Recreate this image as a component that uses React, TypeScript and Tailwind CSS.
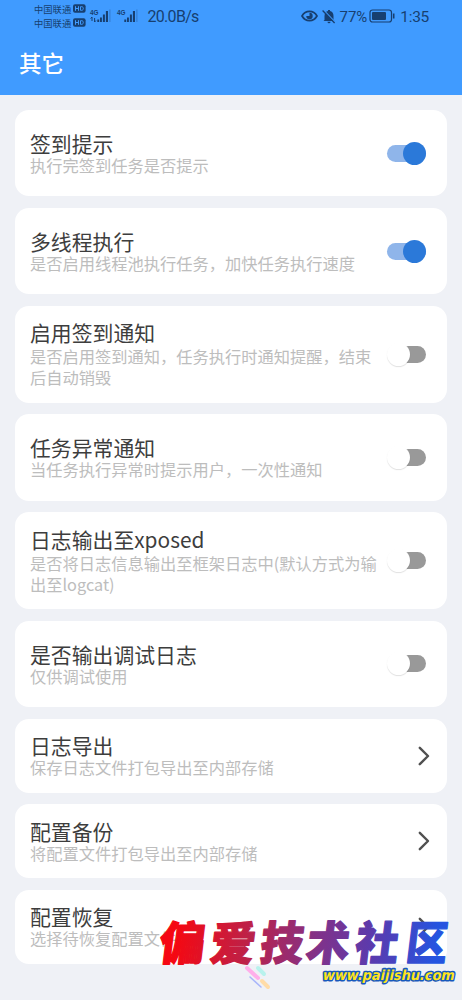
import React from "react";

type Kind = "on" | "off" | "link";
type Item = { title: string; lines: string[]; kind: Kind };

const items: Item[] = [
  { title: "签到提示", lines: ["执行完签到任务是否提示"], kind: "on" },
  { title: "多线程执行", lines: ["是否启用线程池执行任务，加快任务执行速度"], kind: "on" },
  { title: "启用签到通知", lines: ["是否启用签到通知，任务执行时通知提醒，结束", "后自动销毁"], kind: "off" },
  { title: "任务异常通知", lines: ["当任务执行异常时提示用户，一次性通知"], kind: "off" },
  { title: "日志输出至xposed", lines: ["是否将日志信息输出至框架日志中(默认方式为输", "出至logcat)"], kind: "off" },
  { title: "是否输出调试日志", lines: ["仅供调试使用"], kind: "off" },
  { title: "日志导出", lines: ["保存日志文件打包导出至内部存储"], kind: "link" },
  { title: "配置备份", lines: ["将配置文件打包导出至内部存储"], kind: "link" },
  { title: "配置恢复", lines: ["选择待恢复配置文件"], kind: "link" },
];

function Toggle({ on }: { on: boolean }) {
  return on ? (
    <div className="flex h-[17px] w-[39px] items-center justify-end rounded-full bg-[#8fb5ea]">
      <div className="size-[23px] shrink-0 rounded-full bg-[#2b79d9]" />
    </div>
  ) : (
    <div className="flex h-[17px] w-[39px] items-center justify-start">
      <div className="z-10 size-[23px] shrink-0 rounded-full bg-white shadow-[0_1px_1px_rgba(0,0,0,0.12)]" />
      <div className="-ml-[10px] h-[17px] w-[26px] shrink-0 rounded-r-full bg-[#999999]" />
    </div>
  );
}

function Chevron() {
  return (
    <svg className="h-[20px] w-[12px]" viewBox="0 0 12 20" fill="none" stroke="#505050" strokeWidth="2.4" strokeLinecap="round" strokeLinejoin="round">
      <path d="M1.8 1.8 10 10 1.8 18.2" />
    </svg>
  );
}

function Card({ item }: { item: Item }) {
  const two = item.lines.length > 1;
  const link = item.kind === "link";
  const height = link ? "h-[74px]" : two ? "h-[97px]" : "h-[86.4px]";
  const offset = link || two ? "pt-[1px]" : "pt-[2px]";
  return (
    <section className={`flex shrink-0 items-center justify-between rounded-[14px] bg-white pl-[15px] ${link ? "pr-[17px]" : "pr-[21px]"} ${height}`}>
      <div className={`whitespace-nowrap ${offset}`}>
        <h2 className="text-[20.85px] leading-[23px] text-[#3d3d3d]">{item.title}</h2>
        <div className={`text-[16.25px] leading-[21px] text-[#bdbdbd] ${two ? "mt-[2px]" : "mt-0"}`}>
          {item.lines.map((line) => (
            <p key={line}>{line}</p>
          ))}
        </div>
      </div>
      {link ? <Chevron /> : <Toggle on={item.kind === "on"} />}
    </section>
  );
}

function Carrier() {
  return (
    <div className="flex h-[14px] items-center gap-[2px]">
      <span className="shrink-0 whitespace-nowrap text-[9.3px] leading-[14px]">中国联通</span>
      <svg className="h-[9px] w-[13px] shrink-0" viewBox="0 0 13 9">
        <rect y=".3" width="12.6" height="8.4" rx="2" fill="#173f70" />
        <path d="M2.500 2.200v4.600M5.500 2.200v4.600M2.500 4.500h3M7.500 2.700v3.600h1.300c2 0 2-3.600 0-3.600z" fill="none" stroke="#409bff" strokeWidth="1" />
      </svg>
    </div>
  );
}

function Signal({ data }: { data?: boolean }) {
  return (
    <svg className="h-[16px] w-[22px] overflow-visible" viewBox="0 0 22 16" fill="#173f70">
      <text x="0" y="6.500" fontFamily="'Liberation Sans', sans-serif" fontSize="8" fontWeight="700" textLength="8.500" lengthAdjust="spacingAndGlyphs">4G</text>
      {data && <path d="M2 9v4M4.600 10v4M.600 10.500 2 9M4.600 14l1.300-1.500" fill="none" stroke="#173f70" strokeWidth="1" />}
      <rect x="7.300" y="11.500" width="1.900" height="2.500" />
      <rect x="10" y="9.500" width="1.900" height="4.500" />
      <rect x="12.900" y="6.500" width="2" height="7.500" />
      <rect x="15.900" y="3" width="2.100" height="11" />
      <rect x="19.400" y="1.500" width="1" height="12.500" opacity=".35" />
    </svg>
  );
}

function StatusBar() {
  return (
    <div className="flex h-[32px] items-center justify-between pl-[34px] pr-[33px] text-[#173f70]">
      <div className="flex items-center">
        <div className="flex w-[52px] flex-col pb-[1px]">
          <Carrier />
          <Carrier />
        </div>
        <div className="ml-[4px] flex gap-[4.5px]">
          <Signal data />
          <Signal />
        </div>
        <span className="ml-[9px] pt-[2px] font-['Roboto'] text-[16px] leading-[20px] tracking-[-0.7px]">20.0B/s</span>
      </div>
      <div className="flex items-center">
        <svg className="h-[12px] w-[17px]" viewBox="0 0 17 12" fill="none" stroke="#173f70" strokeWidth="1.7">
          <path d="M1 6C4.500-.2 12.500-.2 16 6 12.500 12.200 4.500 12.200 1 6Z" />
          <path d="M8.500 2.800A3.200 3.200 0 1 1 5.300 6L8.500 6Z" fill="#173f70" stroke="none" />
        </svg>
        <svg className="ml-[4px] h-[15px] w-[14px]" viewBox="0 0 14 15" fill="#173f70">
          <path d="M2.500 11V7C2.500 4 4 2.600 6 2.100V1h2v1.100C10 2.600 11.500 4 11.500 7v4l1 1H1.500ZM5.500 12.800h3a1.500 1.500 0 0 1-3 0Z" />
          <path d="m1.500 1 12 12.500" stroke="#409bff" strokeWidth="1.100" />
          <path d="m.600 1.500 12 12.500" stroke="#173f70" strokeWidth="1.300" />
        </svg>
        <span className="ml-[3px] pt-[1px] font-['Roboto'] text-[15px] leading-[20px]">77%</span>
        <svg className="ml-[2px] h-[14px] w-[26px]" viewBox="0 0 26 14" fill="none">
          <rect x="1" y="1" width="21.500" height="12" rx="2.500" stroke="#173f70" strokeWidth="1.200" />
          <rect x="3" y="3" width="14" height="8" rx="1" fill="#173f70" />
          <path d="M24.700 4.500v5" stroke="#173f70" strokeWidth="1.600" />
        </svg>
        <span className="ml-[5px] pt-[1px] font-['Roboto'] text-[15.5px] leading-[20px] tracking-[-0.3px]">1:35</span>
      </div>
    </div>
  );
}

function Watermark() {
  const glyphs: [string, number, number][] = [
    ["偏", 160, 46],
    ["爱", 211, 45],
    ["技", 261, 43],
    ["术", 307, 43],
    ["社", 356, 43],
    ["区", 407, 41],
  ];
  return (
    <svg className="pointer-events-none absolute bottom-0 left-0 h-[100px] w-[462px]" viewBox="0 900 462 100">
      <defs>
        <linearGradient id="brand" gradientUnits="userSpaceOnUse" x1="161" y1="0" x2="448" y2="0">
          <stop offset="0.05" stopColor="#f50812" />
          <stop offset="0.3" stopColor="#bd2148" />
          <stop offset="0.55" stopColor="#80328a" />
          <stop offset="0.75" stopColor="#583bb0" />
          <stop offset="0.96" stopColor="#2454e0" />
        </linearGradient>
      </defs>
      <g strokeLinecap="round" fill="none">
        <path d="m247 968 11 10" stroke="#ffafea" strokeWidth="4" />
        <path d="m258 968 6 6" stroke="#b8f2ed" strokeWidth="4" />
        <path d="m262 981 6 6" stroke="#ffdca8" strokeWidth="4" />
        <path d="m250 977 11 10" stroke="#a9b6fa" strokeWidth="1.500" />
      </g>
      <g transform="translate(0 943) skewX(-7) translate(0 -943)" fill="url(#brand)" stroke="url(#brand)" strokeWidth="1.300" strokeLinejoin="round" fontSize="46" fontWeight="900">
        {glyphs.map(([char, x, width]) => (
          <text key={char} x={x} y="960.500" textLength={width} lengthAdjust="spacingAndGlyphs">{char}</text>
        ))}
      </g>
      <text transform="translate(322 980) skewX(-12)" textLength="132" lengthAdjust="spacingAndGlyphs" fontFamily="'DejaVu Sans', sans-serif" fontSize="14" fontWeight="700" fill="#ffe51a" stroke="#1759bd" strokeWidth="3" strokeLinejoin="round" paintOrder="stroke">www.paijishu.com</text>
    </svg>
  );
}

export default function App() {
  return (
    <div className="relative flex h-[1000px] w-full flex-col overflow-hidden bg-[#eff1f6] font-['Noto_Sans_CJK_SC',sans-serif]">
      <header className="h-[95px] shrink-0 bg-[#409bff]">
        <StatusBar />
        <h1 className="pl-[19px] text-[22.5px] font-medium leading-[60px] text-white">其它</h1>
      </header>
      <main className="flex flex-col gap-[11.5px] px-[15px] pt-[15px]">
        {items.map((item) => (
          <Card key={item.title} item={item} />
        ))}
      </main>
      <Watermark />
    </div>
  );
}
